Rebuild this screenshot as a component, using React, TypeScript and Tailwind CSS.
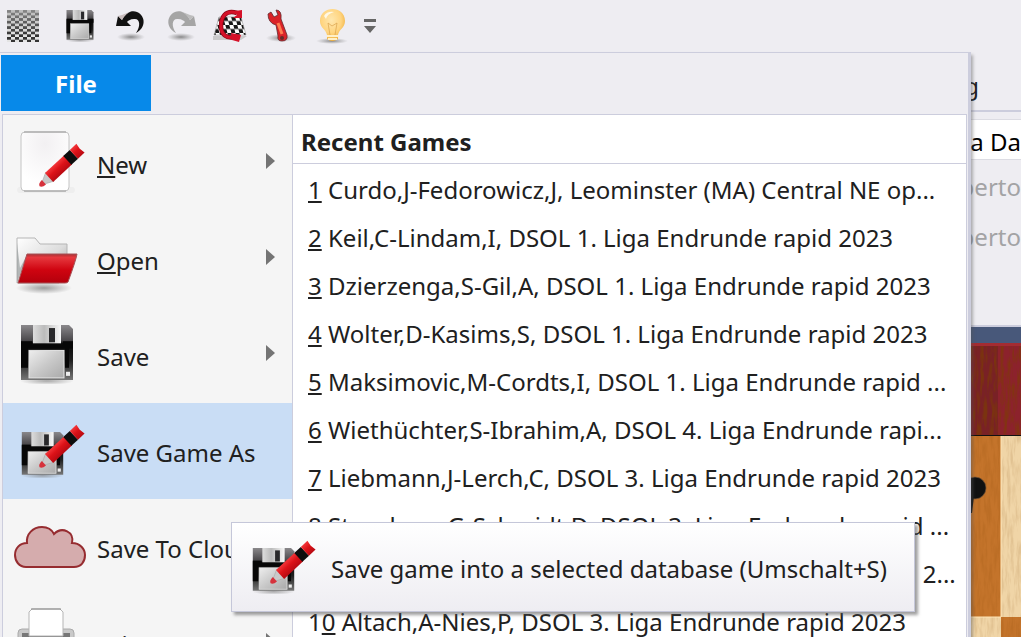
import React from "react";

function Floppy({ className, x, y, width, height }: { className?: string; x?: number; y?: number; width?: number; height?: number }) {
  return (
    <svg viewBox="0 0 54 58" preserveAspectRatio="none" className={className} x={x} y={y} width={width} height={height} aria-hidden="true">
      <defs>
        <linearGradient id="fl-body" x1="0" y1="0" x2="0" y2="1">
          <stop offset="0" stopColor="#8a888b" />
          <stop offset=".28" stopColor="#4b494c" />
          <stop offset=".34" stopColor="#080808" />
          <stop offset=".65" stopColor="#202020" />
          <stop offset="1" stopColor="#777" />
        </linearGradient>
        <linearGradient id="fl-label" x1="0" y1="0" x2="1" y2="1">
          <stop offset="0" stopColor="#eee" />
          <stop offset=".5" stopColor="#c9c9c9" />
          <stop offset="1" stopColor="#aaa" />
        </linearGradient>
        <linearGradient id="fl-metal" x1="0" y1="0" x2="1" y2="0">
          <stop offset="0" stopColor="#ddd" />
          <stop offset=".4" stopColor="#bbb" />
          <stop offset="1" stopColor="#f8f8f8" />
        </linearGradient>
        <radialGradient id="fl-shadow">
          <stop offset="0" stopColor="#777" stopOpacity=".6" />
          <stop offset="1" stopColor="#777" stopOpacity="0" />
        </radialGradient>
      </defs>
      <ellipse cx="27" cy="55" rx="27" ry="4" fill="url(#fl-shadow)" />
      <path d="M1 0H49L53 4V54H1Z" fill="url(#fl-body)" />
      <path d="M1 16H12V20H43V16H53V23H49V42H45V23H8V42H1Z" fill="#070707" />
      <rect x="13" y="0" width="28" height="18" fill="url(#fl-metal)" />
      <rect x="29" y="3" width="6" height="14" fill="#29292b" />
      <rect x="9" y="25" width="35" height="27" fill="url(#fl-label)" stroke="#e5e5e5" />
      <rect x="46" y="46" width="4" height="4" fill="#eee" />
    </svg>
  );
}

function Pencil({ x, y }: { x: number; y: number }) {
  return (
    <>
      <defs>
        <linearGradient id="pencil-red" x1="0" y1="0" x2="0" y2="1">
          <stop offset="0" stopColor="#f3363a" />
          <stop offset=".45" stopColor="#dc1218" />
          <stop offset="1" stopColor="#b80a12" />
        </linearGradient>
      </defs>
      <g transform={`translate(${x} ${y}) rotate(-43)`}>
        <path d="M0 0L12 -6V6Z" fill="#c9c9c9" stroke="#aaa" strokeWidth=".6" />
        <path d="M-2 0Q-1 -3 4 -3V3Q-1 3 -2 0Z" fill="#d6323c" />
        <rect x="11" y="-6" width="26" height="12" fill="url(#pencil-red)" />
        <rect x="36" y="-6" width="9" height="12" fill="#0d0d0d" />
        <path d="M45 -6H54L53 0L54 6H45Z" fill="url(#pencil-red)" />
      </g>
    </>
  );
}

function NewIcon() {
  return (
    <svg viewBox="0 0 72 72" className="h-[72px] w-[72px]" aria-hidden="true">
      <defs>
        <radialGradient id="paper" cx=".5" cy=".2" r=".7">
          <stop offset="0" stopColor="#f2f0f2" />
          <stop offset="1" stopColor="#fff" />
        </radialGradient>
      </defs>
      <rect x="3" y="60" width="58" height="6" rx="3" fill="#eeeeee" />
      <rect x="7" y="5" width="48" height="59" rx="4" fill="url(#paper)" stroke="#c4c4c4" />
      <path d="M10 5H52M10 64H52" stroke="#999" />
      <Pencil x={27} y={58} />
    </svg>
  );
}

function OpenIcon() {
  return (
    <svg viewBox="0 0 72 72" className="h-[72px] w-[72px]" aria-hidden="true">
      <defs>
        <linearGradient id="folder-back" x1="0" y1="0" x2="1" y2="1">
          <stop offset="0" stopColor="#fff" />
          <stop offset=".55" stopColor="#ddd" />
          <stop offset="1" stopColor="#999" />
        </linearGradient>
        <linearGradient id="folder-front" x1="0" y1="0" x2="0" y2="1">
          <stop offset="0" stopColor="#a83236" />
          <stop offset=".12" stopColor="#e6383e" />
          <stop offset=".55" stopColor="#cf0410" />
          <stop offset="1" stopColor="#b3000c" />
        </linearGradient>
        <radialGradient id="folder-shadow">
          <stop offset="0" stopColor="#777" stopOpacity=".7" />
          <stop offset="1" stopColor="#777" stopOpacity="0" />
        </radialGradient>
      </defs>
      <ellipse cx="30" cy="65" rx="28" ry="6" fill="url(#folder-shadow)" />
      <path d="M3 60V15H21L26 21H53V31L45 60Z" fill="url(#folder-back)" stroke="#b5b5b5" />
      <path d="M3 60V20L6 45L13 32Z" fill="#8f9696" opacity=".6" />
      <path d="M13 31H63Q62 37 54 59Q53 60 51 60H4Z" fill="url(#folder-front)" stroke="#a65256" strokeWidth="1" />
    </svg>
  );
}

function SaveIcon() {
  return (
    <svg viewBox="0 0 72 72" className="h-[72px] w-[72px]" aria-hidden="true">
      <Floppy x={6} y={6} width={54} height={59} />
    </svg>
  );
}

function SaveAsIcon() {
  return (
    <svg viewBox="0 0 72 72" className="h-[72px] w-[72px] shrink-0" aria-hidden="true">
      <Floppy x={7} y={17} width={43} height={46} />
      <Pencil x={27} y={51} />
    </svg>
  );
}

function CloudIcon() {
  return (
    <svg viewBox="0 0 72 72" className="h-[72px] w-[72px]" aria-hidden="true">
      <path d="M12 56C5 56 1 50 1 44C1 37 6 32 13 32C12 23 19 16 28 16C34 16 38 19 40 23C48 15 61 21 58 32C66 32 71 38 71 44C71 51 67 56 60 56Z" fill="#d5acad" stroke="#962c30" strokeWidth="2" />
    </svg>
  );
}

function PrintIcon() {
  return (
    <svg viewBox="0 0 72 72" className="h-[72px] w-[72px]" aria-hidden="true">
      <path d="M4 26Q4 22 8 22H56Q60 22 60 26V58H4Z" fill="#c9c9c9" stroke="#aaa" />
      <path d="M8 26H56V30H8Z" fill="#777" />
      <path d="M15 29V5L18 2H46L49 5V29Z" fill="#fff" stroke="#b5b5b5" />
      <path d="M17 2H47" stroke="#888" />
    </svg>
  );
}

function CheckerIcon() {
  return (
    <svg viewBox="0 0 32 32" className="h-8 w-8" aria-hidden="true">
      <defs>
        <pattern id="checks" width="8" height="5.4" patternUnits="userSpaceOnUse">
          <rect width="8" height="5.4" fill="#f0f0f0" />
          <rect width="4" height="2.7" fill="#222" />
          <rect x="4" y="2.7" width="4" height="2.7" fill="#222" />
        </pattern>
        <linearGradient id="checks-fade" x1="0" y1="0" x2="0" y2="1">
          <stop offset="0" stopColor="#aaa" stopOpacity=".75" />
          <stop offset=".8" stopColor="#999" stopOpacity=".15" />
        </linearGradient>
      </defs>
      <rect width="32" height="32" fill="url(#checks)" />
      <rect width="32" height="32" fill="url(#checks-fade)" />
    </svg>
  );
}

function TurnIcon({ forward = false }: { forward?: boolean }) {
  return (
    <svg viewBox="0 0 32 32" className="h-8 w-8" aria-hidden="true">
      <defs>
        <radialGradient id="turn-shadow">
          <stop offset="0" stopColor="#666" stopOpacity=".75" />
          <stop offset="1" stopColor="#888" stopOpacity="0" />
        </radialGradient>
      </defs>
      <ellipse cx="17" cy="27" rx="14" ry="4" fill="url(#turn-shadow)" />
      <g transform={forward ? "translate(34 0) scale(-1 1)" : ""}>
        <path d="M2 16L4 6L8 10C12 2 18 0 23 2C32 6 32 18 22 23C27 16 26 8 20 9C16 9 14 11 13 12L17 16Z" fill={forward ? "#a5a5a5" : "#111"} />
        <path d="M4 6L8 10Q12 3 18 1L8 5Z" fill={forward ? "#bdbdbd" : "#c9bdbd"} />
      </g>
    </svg>
  );
}

function RotateBoardIcon() {
  return (
    <svg viewBox="0 0 34 34" className="h-[34px] w-[34px] shrink-0" aria-hidden="true">
      <defs>
        <pattern id="board-checks" width="8" height="8" patternUnits="userSpaceOnUse" patternTransform="skewX(15)">
          <rect width="8" height="8" fill="#fff" />
          <path d="M0 0H4V4H8V8H4V4H0Z" fill="#171717" />
        </pattern>
      </defs>
      <path d="M0 27H34L28 31H0Z" fill="#bbb" opacity=".7" />
      <path d="M6 8H28L33 26H1Z" fill="url(#board-checks)" stroke="#999" strokeWidth=".6" />
      <path d="M24 4C12 0 8 9 8 17C8 25 13 30 22 28" fill="none" stroke="#8c0717" strokeWidth="4.5" />
      <path d="M24 4C12 0 8 9 8 17C8 25 13 30 22 28" fill="none" stroke="#d51129" strokeWidth="3" />
      <path d="M22 2L29 1V9L20 9L24 6Z" fill="#d51129" />
      <path d="M18 24L28 26L26 33L19 31Z" fill="#d51129" />
    </svg>
  );
}

function WrenchIcon() {
  return (
    <svg viewBox="0 0 32 34" className="h-[34px] w-8" aria-hidden="true">
      <ellipse cx="17" cy="29" rx="15" ry="4" fill="url(#turn-shadow)" />
      <path d="M4 5L7 3L10 8L14 6L12 1Q18 1 17 10L23 26Q24 32 18 32Q13 32 14 27L12 16Q4 14 4 5Z" fill="#da2328" stroke="#5e2a2e" strokeWidth=".8" />
      <path d="M14 14L18 25" stroke="#ff7c50" strokeWidth="3" />
      <circle cx="18" cy="29" r="2" fill="#642c29" />
    </svg>
  );
}

function BulbIcon() {
  return (
    <svg viewBox="0 0 36 36" className="h-9 w-9 shrink-0" aria-hidden="true">
      <defs>
        <radialGradient id="bulb" cx=".45" cy=".35" r=".65">
          <stop offset="0" stopColor="#ffe7ae" />
          <stop offset=".6" stopColor="#ffd581" />
          <stop offset="1" stopColor="#efaf3c" />
        </radialGradient>
      </defs>
      <ellipse cx="20" cy="33" rx="16" ry="3" fill="url(#turn-shadow)" />
      <g transform="translate(1 0)">
        <path d="M7 13C7 -3 32 -3 32 13C32 20 26 21 25 27V31Q19 35 14 31V27C13 21 7 20 7 13Z" fill="url(#bulb)" />
        <path d="M17 27L15 15L19 18L24 15L22 27" fill="none" stroke="#d9a34d" strokeOpacity=".7" />
        <path d="M14 28H25M15 31H24" stroke="#fff0c8" strokeWidth="2" />
        <path d="M11 8Q14 3 21 4Q14 6 13 11Z" fill="#fff8e5" />
      </g>
    </svg>
  );
}

function Board() {
  return (
    <svg viewBox="0 0 50 294" className="h-[294px] w-full shrink-0" preserveAspectRatio="xMinYMin slice" role="img" aria-label="Chess board">
      <defs>
        <filter id="grain" x="0" y="0" width="1" height="1">
          <feTurbulence type="fractalNoise" baseFrequency=".3 .05" numOctaves="3" seed="4" />
          <feColorMatrix values="0 0 0 0 .2  0 0 0 0 .05  0 0 0 0 0  3 0 0 0 -1.2" />
        </filter>
      </defs>
      <rect width="50" height="94" fill="#792126" />
      <rect x="27" width="23" height="94" fill="#8c222c" />
      <rect width="50" height="94" filter="url(#grain)" opacity=".6" />
      <rect width="50" height="3" fill="#a32c32" />
      <rect y="92" width="50" height="1" fill="#111" />
      <rect y="93" width="30" height="181" fill="#c4742b" />
      <rect x="30" y="93" width="20" height="181" fill="#f0d5a7" />
      <rect y="274" width="30" height="20" fill="#f0d5a7" />
      <rect x="30" y="274" width="20" height="20" fill="#c4742b" />
      <rect y="93" width="50" height="201" filter="url(#grain)" opacity=".12" />
      <path d="M30 93V274M0 274H30" stroke="#ffe6b7" />
      <circle cx="4" cy="145" r="11" fill="#111" stroke="#775638" strokeWidth=".7" />
      <path d="M0 153H3L1 170H0Z" fill="#111" />
    </svg>
  );
}

const commands = [
  { label: <><u>N</u>ew</>, icon: <NewIcon />, more: true },
  { label: <><u>O</u>pen</>, icon: <OpenIcon />, more: true },
  { label: "Save", icon: <SaveIcon />, more: true },
  { label: "Save Game As", icon: <SaveAsIcon />, active: true },
  { label: "Save To Cloud", icon: <CloudIcon /> },
  { label: "Print", icon: <PrintIcon />, more: true },
];

const games = [
  ["", "1", "Curdo,J-Fedorowicz,J, Leominster (MA) Central NE op..."],
  ["", "2", "Keil,C-Lindam,I, DSOL 1. Liga Endrunde rapid 2023"],
  ["", "3", "Dzierzenga,S-Gil,A, DSOL 1. Liga Endrunde rapid 2023"],
  ["", "4", "Wolter,D-Kasims,S, DSOL 1. Liga Endrunde rapid 2023"],
  ["", "5", "Maksimovic,M-Cordts,I, DSOL 1. Liga Endrunde rapid ..."],
  ["", "6", "Wiethüchter,S-Ibrahim,A, DSOL 4. Liga Endrunde rapi..."],
  ["", "7", "Liebmann,J-Lerch,C, DSOL 3. Liga Endrunde rapid 2023"],
  ["", "8", "Stansberg,G-Schmidt,D, DSOL 3. Liga Endrunde rapid ..."],
  ["", "9", "Hoffmann,M-Schulze,T, DSOL 3. Liga Endrunde rapid 2..."],
  ["1", "0", "Altach,A-Nies,P, DSOL 3. Liga Endrunde rapid 2023"],
];

const tool = "flex h-9 w-8 shrink-0 items-center justify-center";

export default function App() {
  return (
    <div className="relative flex h-screen flex-col overflow-hidden bg-[#eeedf2] font-['Noto_Sans','Open_Sans',sans-serif] text-[24px] leading-8 text-[#202020]">
      <header className="flex h-[52px] shrink-0 items-center pl-[7px]" aria-label="Quick access">
        <button className={tool} aria-label="Board"><CheckerIcon /></button>
        <div className="flex items-center gap-[18px] pl-[25px]">
          <button className={tool} aria-label="Save"><Floppy className="h-8 w-7" /></button>
          <button className={tool} aria-label="Undo"><TurnIcon /></button>
          <button className={tool} aria-label="Redo"><TurnIcon forward /></button>
          <button className={tool} aria-label="Rotate board"><RotateBoardIcon /></button>
          <button className={tool} aria-label="Options"><WrenchIcon /></button>
          <button className={tool} aria-label="Hint"><BulbIcon /></button>
          <button className="flex h-9 w-3 items-center" aria-label="Customize">
            <svg viewBox="0 0 12 14" className="h-[14px] w-3" aria-hidden="true"><path d="M0 0H12V3H0ZM0 7H12L6 14Z" fill="#666" /></svg>
          </button>
        </div>
      </header>

      <div className="flex min-h-0 flex-1">
        <section className="z-10 flex min-w-0 flex-1 flex-col border-t border-r-[3px] border-[#cccddd] pr-px shadow-[2px_3px_3px_#55555570]" aria-label="File menu">
          <div className="h-[61px] shrink-0 pt-[2px] pl-px">
            <button className="h-14 w-[150px] bg-[#0789e9] pt-[2px] font-bold text-white">File</button>
          </div>
          <div className="ml-[2px] flex min-h-0 flex-1 overflow-hidden border-t border-r border-l border-[#cccddd]">
            <nav className="w-[289px] shrink-0 bg-[#f5f5f5]">
              {commands.map((c, i) => (
                <button key={i} className={`flex h-24 w-full items-center pl-[11px] text-left ${c.active ? "bg-[#c9ddf5]" : ""}`}>
                  {c.icon}
                  <span className="min-w-0 flex-1 pt-1 pl-[11px] whitespace-nowrap">{c.label}</span>
                  {c.more && (
                    <svg viewBox="0 0 9 16" className="mr-[17px] mb-1 h-4 w-[9px]" aria-hidden="true"><path d="M0 0L9 8L0 16Z" fill="#747474" /></svg>
                  )}
                </button>
              ))}
            </nav>
            <div className="min-w-0 flex-1 border-l border-[#cccddd] bg-white">
              <h2 className="flex h-[49px] items-center border-b border-[#cccddd] pt-[6px] pl-2 font-bold">Recent Games</h2>
              <ul className="pt-[2px]">
                {games.map(([lead, key, text]) => (
                  <li key={lead + key}>
                    <a href="#" className="flex h-12 items-center pl-[15px] whitespace-nowrap">
                      <span>{lead}<u>{key}</u> {text}</span>
                    </a>
                  </li>
                ))}
              </ul>
            </div>
          </div>
        </section>

        <aside className="flex w-[50px] shrink-0 flex-col overflow-hidden">
          <div className="flex h-[60px] shrink-0 items-center justify-end border-b-2 border-[#cccddd] pt-[10px] pr-[42px]">g</div>
          <div className="mt-[7px] flex h-[41px] shrink-0 items-center justify-end border-y border-[#dcdce3] bg-white pt-1 whitespace-nowrap text-black">ga Da</div>
          <div className="flex h-[50px] shrink-0 items-center justify-end pt-1 text-[#a3a3a5]">perto</div>
          <div className="flex h-[50px] shrink-0 items-center justify-end pt-1 text-[#a3a3a5]">perto</div>
          <div className="mt-[65px] h-[18px] shrink-0 border-t-2 border-[#cccddd] bg-[#48587a]" />
          <Board />
        </aside>
      </div>

      <div role="tooltip" className="absolute top-[522px] left-[231px] z-20 flex h-[90px] w-[684px] items-center border border-[#c5c7d9] bg-linear-to-b from-white to-[#eeedf2] pl-[13px] shadow-[3px_3px_3px_#55555590]">
        <SaveAsIcon />
        <span className="pt-1 pl-[14px] whitespace-nowrap">Save game into a selected database (Umschalt+S)</span>
      </div>
    </div>
  );
}
